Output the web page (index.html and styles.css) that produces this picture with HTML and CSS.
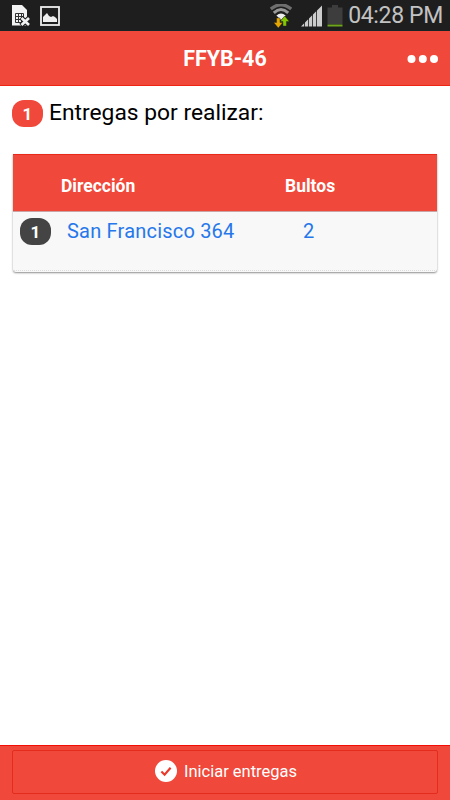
FILE: index.html
```html
<!DOCTYPE html>
<html lang="es">
<head>
    <meta charset="UTF-8">
    <meta name="viewport" content="width=device-width, initial-scale=1.0">
    <title>FFYB-46 - Entregas</title>
    <link rel="stylesheet" href="styles.css">
</head>
<body>
    <!-- Barra de estado -->
    <div class="status-bar">
        <div class="status-left">
            <svg class="icon-sim" width="20" height="24" viewBox="0 0 20 24">
                <path d="M1 1h10l5 5v15.500H1z" fill="#f2f2f2"/>
                <path d="M4.500 9.500h8v9h-8zM4.500 12.500h8M4.500 15.500h8M7.500 9.500v9M10.500 9.500v9" fill="none" stroke="#333" stroke-width="1"/>
                <path d="M10 13.500l8.500 8M18.500 13.500l-8.500 8" stroke="#1e1e1e" stroke-width="4.800"/>
                <path d="M10.500 14l7.500 7M18 14l-7.500 7" stroke="#f2f2f2" stroke-width="2.700"/>
            </svg>
            <svg class="icon-image" width="20" height="20" viewBox="0 0 20 20">
                <rect x="1" y="1" width="18" height="18" fill="none" stroke="#eee" stroke-width="1.800"/>
                <path d="M3 16v-5l4-4 2 3 2 1 2-1 2 1 2 2v3z" fill="#eee"/>
            </svg>
        </div>
        <div class="status-right">
            <svg class="icon-wifi" width="22" height="25" viewBox="0 0 22 25">
                <path d="M0.800 5Q11-3.500 21.200 5" fill="none" stroke="#6f6f6f" stroke-width="3.200"/>
                <path d="M3.800 8.800Q11 2.300 18.200 8.800" fill="none" stroke="#999" stroke-width="3"/>
                <path d="M6.400 11.600Q11 7.600 15.600 11.600L11 16z" fill="#eee"/>
                <path d="M6.600 14h3.400v4.500h2.800L8.300 24l-4.600-5.500h2.900z" fill="#e6a800" stroke="#1e1e1e" stroke-width=".4"/>
                <path d="M14.700 12l4.600 5.500h-2.900V22H13v-4.500h-2.800z" fill="#84c800" stroke="#1e1e1e" stroke-width=".4"/>
            </svg>
            <svg class="icon-signal" width="22" height="22" viewBox="0 0 22 22">
                <path d="M0 21.500L3.200 18.300v3.200zM4 17.500l3.200-3.200v7.200H4zM8 13.500l3.200-3.200v11.200H8zM12 9.500l3.200-3.200v15.200H12zM16 5.500L21 .5v21h-5z" fill="#ccc"/>
            </svg>
            <svg class="icon-battery" width="16" height="22" viewBox="0 0 16 22">
                <path d="M.5 2.500H5V0h6v2.500h4.500V19H.5z" fill="#3d3d3d"/>
                <path d="M.5 19.500h15v2H.5z" fill="#6fa51d"/>
            </svg>
            <span class="clock">04:28 PM</span>
        </div>
    </div>

    <!-- Cabecera -->
    <header class="header">
        <h1 class="header-title">FFYB-46</h1>
        <svg class="header-menu" width="32" height="8" viewBox="0 0 32 8">
            <circle cx="4.500" cy="4" r="4" fill="#fff"/>
            <circle cx="15.800" cy="4" r="4" fill="#fff"/>
            <circle cx="27" cy="4" r="4" fill="#fff"/>
        </svg>
    </header>

    <!-- Listado de entregas -->
    <main class="content">
        <div class="summary">
            <span class="badge">1</span>
            <h2 class="summary-title">Entregas por realizar:</h2>
        </div>

        <div class="deliveries">
            <div class="deliveries-head">
                <span class="col-address">Dirección</span>
                <span>Bultos</span>
            </div>
            <div class="delivery">
                <span class="badge badge-dark">1</span>
                <span class="delivery-address">San Francisco 364</span>
                <span class="delivery-count">2</span>
            </div>
        </div>
    </main>

    <!-- Pie con la acción principal -->
    <footer class="footer">
        <button class="start-button" type="button">
            <svg width="22" height="22" viewBox="0 0 22 22">
                <circle cx="11" cy="11" r="11" fill="#fff"/>
                <path d="M6.400 11.500l3.200 3.200 6-7" fill="none" stroke="#e83b2c" stroke-width="2.200"/>
            </svg>
            <span class="start-label">Iniciar entregas</span>
        </button>
    </footer>
</body>
</html>
```
FILE: styles.css
```css
* {
    margin: 0;
    padding: 0;
    box-sizing: border-box;
}

body {
    font-family: Roboto, "Liberation Sans", sans-serif;
    height: 100vh;
    display: flex;
    flex-direction: column;
    background: #fff;
    color: #000;
    overflow: hidden;
}

svg {
    display: block;
    flex-shrink: 0;
}

/* Barra de estado */
.status-bar {
    height: 31px;
    flex-shrink: 0;
    display: flex;
    justify-content: space-between;
    background: #1e1e1e;
    border-bottom: 1px solid #172426;
    padding: 0 7px 0 11px;
}

.status-left {
    display: flex;
    gap: 9px;
    padding-top: 4px;
}

.icon-image {
    margin-top: 2px;
}

.status-right {
    display: flex;
    align-items: flex-start;
}

.icon-wifi {
    margin: 4px 9px 0 0;
}

.icon-signal {
    margin: 5px 4px 0 0;
}

.icon-battery {
    margin: 5px 5px 0 0;
}

.clock {
    color: #c2c2c2;
    font-size: 23px;
    letter-spacing: -0.35px;
    line-height: 31px;
    white-space: nowrap;
}

/* Cabecera */
.header {
    height: 55px;
    flex-shrink: 0;
    display: grid;
    grid-template-columns: 1fr auto 1fr;
    align-items: center;
    background: #f0483a;
    border-bottom: 1px solid #ef2414;
    padding: 0 11px;
}

.header-title {
    grid-column: 2;
    color: #fff;
    font-size: 21.400px;
    font-weight: 700;
    line-height: 24px;
    padding-top: 2px;
}

.header-menu {
    justify-self: end;
    margin-top: 1px;
}

/* Contenido */
.content {
    flex: 1;
    padding: 12px 13px 0;
}

.summary {
    display: flex;
    align-items: center;
    gap: 6px;
    height: 30px;
    margin-left: -1px;
}

.summary-title {
    font-size: 22.800px;
    font-weight: 400;
    line-height: 30px;
}

.badge {
    width: 31px;
    height: 27px;
    flex-shrink: 0;
    border-radius: 12px;
    background: #f0483a;
    color: #fff;
    font-size: 17px;
    font-weight: 700;
    line-height: 28px;
    text-align: center;
}

.badge-dark {
    background: #444;
}

/* Tabla */
.deliveries {
    height: 118px;
    margin-top: 26px;
    background: #f8f8f8;
    border-radius: 0 0 3px 3px;
    box-shadow: 0 1px 2px rgba(0, 0, 0, 0.45);
}

.deliveries-head,
.delivery {
    display: grid;
    grid-template-columns: 272px 1fr;
}

.deliveries-head {
    height: 58px;
    align-items: center;
    padding-top: 5px;
    background: #f0483a;
    border-top: 1px solid #e92a1b;
    border-bottom: 1px solid #c8a5a2;
    color: #fff;
    font-size: 17.500px;
    font-weight: 700;
}

.col-address {
    padding-left: 48px;
}

.delivery {
    grid-template-columns: 54px 236px 1fr;
    height: 59px;
    padding-top: 6px;
    border-bottom: 1px dotted #ddd;
    color: #2577eb;
    font-size: 20px;
    letter-spacing: 0.2px;
    line-height: 27px;
}

.delivery .badge {
    margin-left: 7px;
    letter-spacing: 0;
}

/* Pie */
.footer {
    height: 55px;
    flex-shrink: 0;
    background: #f0483a;
    border-top: 1px solid #f20d05;
    padding: 4px 12px;
}

.start-button {
    width: 100%;
    height: 44px;
    display: flex;
    align-items: center;
    justify-content: center;
    gap: 7px;
    background: none;
    border: 1px solid #e32b1e;
    border-radius: 2px;
    color: #fff;
    font-family: inherit;
    font-size: 16.500px;
    padding: 0 0 2px 2px;
}
```
